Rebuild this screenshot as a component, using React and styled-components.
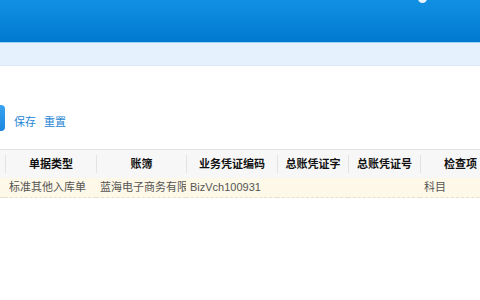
import React from "react";
import styled, { createGlobalStyle } from "styled-components";

const GlobalStyle = createGlobalStyle`
  html, body {
    margin: 0;
    padding: 0;
    width: 480px;
    height: 300px;
    overflow: hidden;
    background: #ffffff;
    font-family: "Liberation Sans", "Noto Sans CJK SC", sans-serif;
  }
`;

const columns = [
  { key: "check", title: "", width: 5 },
  { key: "billType", title: "单据类型", width: 91 },
  { key: "book", title: "账簿", width: 90 },
  { key: "code", title: "业务凭证编码", width: 91 },
  { key: "word", title: "总账凭证字", width: 71 },
  { key: "num", title: "总账凭证号", width: 72 },
  { key: "item", title: "检查项", width: 80 },
];

const rows = [
  {
    check: "",
    billType: "标准其他入库单",
    book: "蓝海电子商务有限公司",
    code: "BizVch100931",
    word: "",
    num: "",
    item: "科目",
  },
];

const App = () => {
  return (
    <Page>
      <GlobalStyle />
      <TopBar>
        <TopIcon />
      </TopBar>
      <SubBar />
      <Toolbar>
        <QueryButton />
        <LinkButton>保存</LinkButton>
        <LinkButton>重置</LinkButton>
      </Toolbar>
      <Grid>
        <colgroup>
          {columns.map((c) => (
            <col key={c.key} style={{ width: c.width }} />
          ))}
        </colgroup>
        <thead>
          <tr>
            {columns.map((c, i) => (
              <HeadCell key={c.key} $first={i === 0}>
                <span>{c.title}</span>
              </HeadCell>
            ))}
          </tr>
        </thead>
        <tbody>
          {rows.map((r, key) => (
            <DataRow key={key}>
              {columns.map((c) => (
                <DataCell key={c.key}>
                  <CellText>{r[c.key]}</CellText>
                </DataCell>
              ))}
            </DataRow>
          ))}
        </tbody>
      </Grid>
    </Page>
  );
};

const Page = styled.div`
  width: 480px;
  height: 300px;
  overflow: hidden;
`;

const TopBar = styled.div`
  position: relative;
  height: 42px;
  background: linear-gradient(#1190e2, #0079d1);
  border-bottom: 1px solid #9fd2f3;
`;

const TopIcon = styled.div`
  position: absolute;
  left: 418px;
  top: -6px;
  width: 9px;
  height: 9px;
  border-radius: 50%;
  background: #e8f4ff;
`;

const SubBar = styled.div`
  height: 22px;
  background: #e5f2fd;
  border-bottom: 1px solid #d8eaf8;
`;

const Toolbar = styled.div`
  display: flex;
  align-items: center;
  height: 26px;
  margin-top: 39px;
  margin-bottom: 18px;
`;

const QueryButton = styled.div`
  width: 5px;
  height: 26px;
  margin-right: 9px;
  border-radius: 0 4px 4px 0;
  background: linear-gradient(#3aa2f0, #1a86e0);
`;

const LinkButton = styled.a`
  font-size: 11px;
  color: #1f86d6;
  margin-right: 8px;
  margin-top: 5px;
  cursor: pointer;
`;

const Grid = styled.table`
  table-layout: fixed;
  border-collapse: collapse;
  width: 500px;
  font-size: 11px;
`;

const HeadCell = styled.th`
  height: 28px;
  padding: 0;
  background: #f7f7f7;
  border-top: 1px solid #e2e2e2;
  font-weight: bold;
  color: #111;
  text-align: center;
  white-space: nowrap;
  overflow: hidden;

  span {
    display: block;
    line-height: 18px;
    border-left: ${(p) => (p.$first ? "none" : "1px solid #e3e3e3")};
  }
`;

const DataRow = styled.tr`
  background: #fdf8e7;
  border-bottom: 1px dashed #e6e0d0;
`;

const DataCell = styled.td`
  height: 19px;
  padding: 0 0 0 4px;
  color: #555;
  line-height: 19px;
`;

const CellText = styled.div`
  white-space: nowrap;
  overflow: hidden;
  text-overflow: clip;
`;

export default App;
